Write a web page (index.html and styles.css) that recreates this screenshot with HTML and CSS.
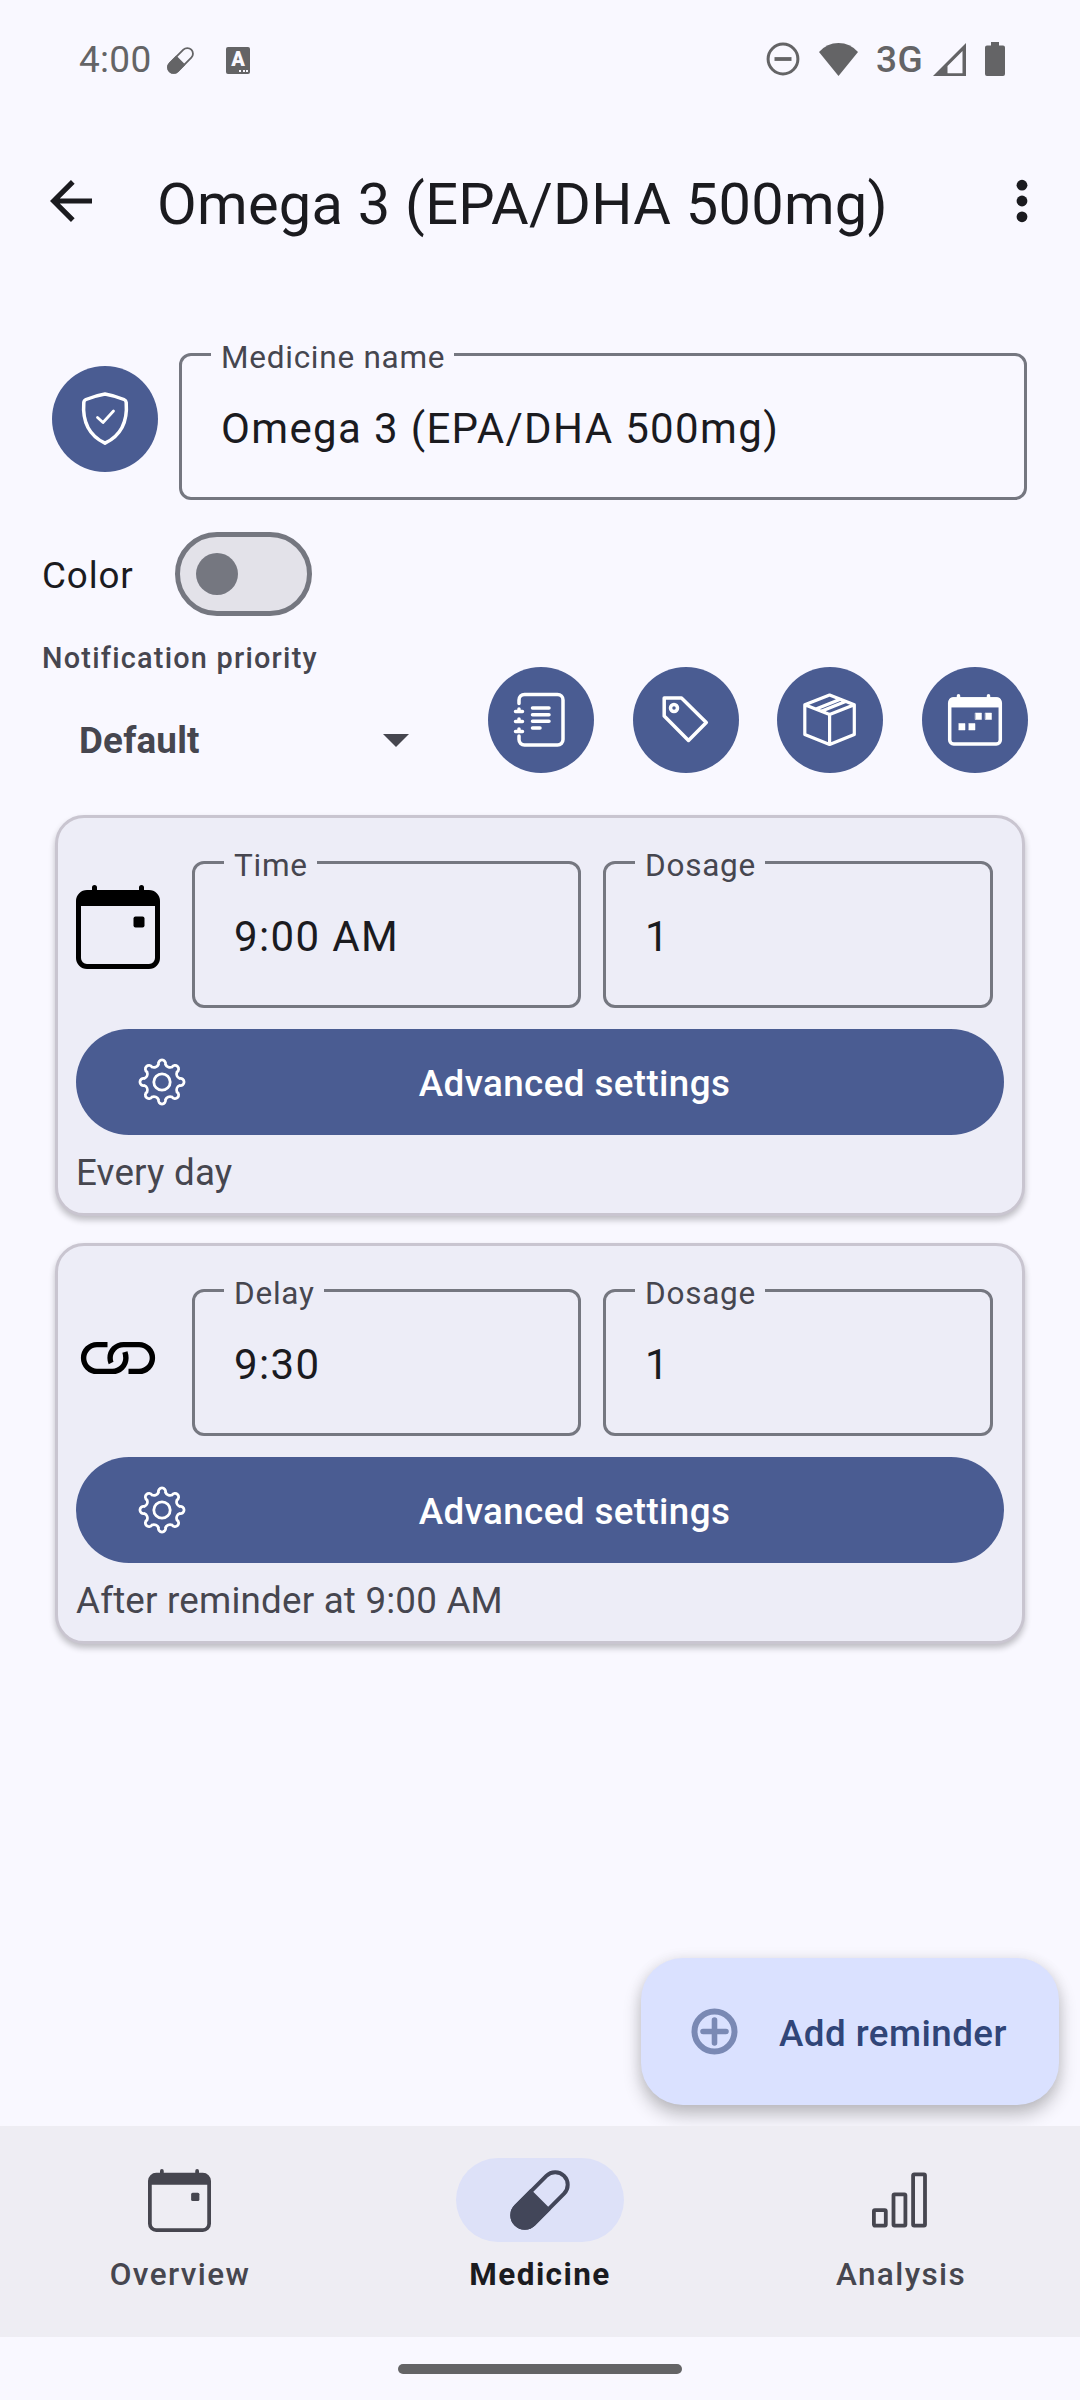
FILE: index.html
```html
<!DOCTYPE html>
<html lang="en">
<head>
<meta charset="utf-8">
<title>Omega 3 (EPA/DHA 500mg)</title>
<link rel="stylesheet" href="styles.css">
</head>
<body>
<svg class="defs" aria-hidden="true">
  <symbol id="pill" viewBox="0 0 60 60">
    <g transform="rotate(45 30 30)">
      <rect x="17.5" y="-4" width="25" height="68" rx="12.5" fill="none" stroke="currentColor" stroke-width="4"/>
      <path d="M15.5 29h29v22.500a14.500 14.500 0 0 1-29 0z" fill="currentColor"/>
    </g>
  </symbol>
  <symbol id="calendar" viewBox="0 0 84 84">
    <path d="M16 2.500a2.500 2.500 0 0 1 5 0v2.500h42V2.500a2.500 2.500 0 0 1 5 0v2.500h5a11 11 0 0 1 11 11v57a11 11 0 0 1-11 11H11A11 11 0 0 1 0 73V16A11 11 0 0 1 11 5h5zM5 21v52a6 6 0 0 0 6 6h62a6 6 0 0 0 6-6V21z" fill="currentColor" fill-rule="evenodd"/>
    <rect x="57.500" y="31.500" width="11" height="11" rx="2" fill="currentColor"/>
  </symbol>
  <symbol id="gear" viewBox="-24 -24 48 48">
    <g fill="none" stroke="currentColor" stroke-width="2.800">
      <path d="M-3.510-17.650A3.600 3.600 0 1 1 3.510-17.650A5 5 0 0 0 10-14.970A3.600 3.600 0 1 1 14.970-10A5 5 0 0 0 17.650-3.510A3.600 3.600 0 1 1 17.650 3.510A5 5 0 0 0 14.970 10A3.600 3.600 0 1 1 10 14.970A5 5 0 0 0 3.510 17.650A3.600 3.600 0 1 1-3.510 17.650A5 5 0 0 0-10 14.970A3.600 3.600 0 1 1-14.970 10A5 5 0 0 0-17.650 3.510A3.600 3.600 0 1 1-17.650-3.510A5 5 0 0 0-14.970-10A3.600 3.600 0 1 1-10-14.970A5 5 0 0 0-3.510-17.650z"/>
      <circle r="8.200"/>
    </g>
  </symbol>
</svg>

<header class="status">
  <span class="time">4:00</span>
  <svg class="s-pill" viewBox="0 0 60 60"><use href="#pill"/></svg>
  <span class="s-app">A<i></i></span>
  <div class="status-right">
    <svg width="34" height="34" viewBox="0 0 34 34" fill="none" stroke="currentColor"><circle cx="17" cy="17" r="14.900" stroke-width="3"/><path d="M8.500 17h17" stroke-width="3.800"/></svg>
    <svg class="s-wifi" width="39" height="34" viewBox="0 0 39 34"><path d="M0 10Q8 1 19.500 1T39 10L19.500 34z" fill="currentColor"/></svg>
    <span class="net">3G</span>
    <svg class="s-signal" width="33" height="34" viewBox="0 0 33 34"><path d="M0 34L33 1v33zM14.500 24v7.200H29.500V9z" fill="currentColor" fill-rule="evenodd"/></svg>
    <svg class="s-battery" width="20" height="34" viewBox="0 0 20 34"><path d="M6 0h8v3.500h4a2 2 0 0 1 2 2V32a2 2 0 0 1-2 2H2a2 2 0 0 1-2-2V5.500a2 2 0 0 1 2-2h4z" fill="currentColor"/></svg>
  </div>
</header>

<div class="appbar">
  <svg class="back" width="42" height="42" viewBox="0 0 42 42" fill="none" stroke="currentColor" stroke-width="5.200"><path d="M22.800 1.900L3.700 21l19.100 19.100M3 21h39"/></svg>
  <h1>Omega 3 (EPA/DHA 500mg)</h1>
  <svg class="more" width="12" height="44" viewBox="0 0 12 44" fill="currentColor"><circle cx="6" cy="6.200" r="5.400"/><circle cx="6" cy="22" r="5.400"/><circle cx="6" cy="37.800" r="5.400"/></svg>
</div>

<main>
  <div class="name-row">
    <button class="round"><svg viewBox="0 0 106 106"><path d="M53 28Q62 29.500 72 33.500q2 .8 2.200 3Q76.500 66 53 77.200Q29.500 66 31.800 36.500q.2-2.200 2.200-3Q44 29.500 53 28z"/><path d="M45.500 51.500l5.500 5 10.500-11.500" stroke-width="2.800"/></svg></button>
    <div class="field name-field"><span class="label">Medicine name</span><span class="value">Omega 3 (EPA/DHA 500mg)</span></div>
  </div>
  <div class="color-row"><span>Color</span><div class="toggle"><i></i></div></div>
  <div class="priority-row">
    <div class="priority">
      <div class="priority-label">Notification priority</div>
      <div class="select"><span>Default</span><svg width="26" height="13" viewBox="0 0 26 13"><path d="M0 0h26L13 13z" fill="currentColor"/></svg></div>
    </div>
    <div class="actions">
      <button class="round"><svg viewBox="0 0 106 106"><path d="M31 36.500V33a5.500 5.500 0 0 1 5.500-5.500h33A5.500 5.500 0 0 1 75 33v39.500a5.500 5.500 0 0 1-5.500 5.500h-33a5.500 5.500 0 0 1-5.500-5.500V69"/><path d="M27.500 44.500h7m-3.500-2.500v2M27.500 54.500h7m-3.500-2.500v2M27.500 64.500h7m-3.500-2.500v2M44.500 41h16.500M44.500 47.700h16.500M44.500 54.300h16.500M44.500 61h7.500"/></svg></button>
      <button class="round"><svg viewBox="0 0 106 106"><path d="M31.200 31h17.300L73.300 55.500 55.500 73.500 31.200 49z"/><circle cx="41" cy="41" r="3.500"/></svg></button>
      <button class="round"><svg viewBox="0 0 106 106"><path d="M52.600 28L77.300 37.800V67.500L52.600 77.500 27.800 67.500V37.800zM27.800 37.800L52.600 47.500 77.300 37.800M52.600 47.500v30M39 42L63.300 32.300M44.300 44.200L68.500 34.500" stroke-width="3.200"/></svg></button>
      <button class="round"><svg viewBox="0 0 106 106"><rect x="27.700" y="32" width="50.600" height="45" rx="4"/><path d="M36.500 28.700v4M66.500 28.700v4"/><path d="M27 40V34.500a4 4 0 0 1 4-4H75a4 4 0 0 1 4 4V40zM53.500 46h6v6.500h-6zM63.500 46h6v6.500h-6zM37 56.500h6V63h-6zM47 56.500h6V63h-6z" fill="#fff" stroke-width=".5"/></svg></button>
    </div>
  </div>

  <section class="card">
    <div class="fields">
      <svg class="kind" viewBox="0 0 84 84"><use href="#calendar" /></svg>
      <div class="field"><span class="label">Time</span><span class="value">9:00 AM</span></div>
      <div class="field"><span class="label">Dosage</span><span class="value">1</span></div>
    </div>
    <button class="advanced"><svg><use href="#gear"/></svg><span>Advanced settings</span></button>
    <p>Every day</p>
  </section>

  <section class="card">
    <div class="fields">
      <svg class="kind" viewBox="76 1313 84 84" fill="none" stroke="currentColor" stroke-width="5.400"><path d="M107.500 1344.600H97a13.400 13.400 0 0 0 0 26.800h15.500a13.400 13.400 0 0 0 13.400-13.400q0-3-1-6M128.500 1371.400H139a13.400 13.400 0 0 0 0-26.800h-15.500a13.400 13.400 0 0 0-13.400 13.400q0 3 1 5"/></svg>
      <div class="field"><span class="label">Delay</span><span class="value">9:30</span></div>
      <div class="field"><span class="label">Dosage</span><span class="value">1</span></div>
    </div>
    <button class="advanced"><svg><use href="#gear"/></svg><span>Advanced settings</span></button>
    <p>After reminder at 9:00 AM</p>
  </section>

  <button class="fab"><svg width="47" height="47" viewBox="0 0 47 47" fill="none" stroke="currentColor"><circle cx="23.500" cy="23.500" r="20" stroke-width="6"/><path d="M23.500 12v23M12 23.500h23" stroke-width="5.600" stroke-linecap="round"/></svg><span>Add reminder</span></button>
</main>

<nav>
  <a class="tab"><span class="ind"><svg class="n-cal" viewBox="0 0 84 84"><use href="#calendar"/></svg></span><span>Overview</span></a>
  <a class="tab active"><span class="ind"><svg class="n-pill" viewBox="0 0 60 60"><use href="#pill"/></svg></span><span>Medicine</span></a>
  <a class="tab"><span class="ind"><svg class="n-bars" width="56" height="56" viewBox="0 0 56 56" fill="none" stroke="currentColor" stroke-width="3.800"><rect x="1.900" y="38.200" width="11.900" height="15.400" rx="1"/><rect x="21.500" y="22.300" width="11.900" height="31.300" rx="1"/><rect x="41.100" y="2.400" width="11.900" height="51.200" rx="1"/></svg></span><span>Analysis</span></a>
</nav>
<footer><i></i></footer>
</body>
</html>
```
FILE: styles.css
```css
* { box-sizing: border-box; }
body {
  margin: 0;
  height: 2400px;
  display: flex;
  flex-direction: column;
  background: #f9f8ff;
  color: #1b1b1f;
  font-family: Roboto, sans-serif;
  overflow: hidden;
}
.defs { position: absolute; width: 0; height: 0; }
button { border: 0; padding: 0; margin: 0; font: inherit; color: inherit; }
svg { display: block; flex: none; overflow: visible; }
symbol { overflow: visible; }

/* system status bar */
.status { height: 118px; padding: 0 75px 0 79px; display: flex; align-items: center; color: #646466; font-size: 37px; }
.time { width: 88px; letter-spacing: .3px; }
.s-pill { width: 27px; height: 27px; margin-top: 3px; }
.s-app {
  position: relative; width: 24px; height: 27px; margin: 2px 0 0 32px; border-radius: 2px;
  background: #646466; color: #f9f8ff; font-size: 20px; line-height: 25px; font-weight: 900; text-align: center;
}
.s-app i { position: absolute; right: 2px; bottom: 2px; width: 9px; height: 2px; background: repeating-linear-gradient(90deg, #f9f8ff 0 2px, transparent 2px 3.500px); }
.status-right { margin-left: auto; display: flex; align-items: center; }
.s-wifi { margin-left: 19px; }
.net { margin-left: 18px; width: 57px; font-weight: 500; letter-spacing: .4px; }
.s-signal { display: block; }
.s-battery { margin-left: 19px; }

/* app bar */
.appbar { height: 167px; padding: 0 52px 2px 50px; display: flex; align-items: center; }
.appbar h1 { margin: 0; padding-top: 7px; margin-left: 65px; font-size: 57.750px; font-weight: 400; line-height: 72px; letter-spacing: .27px; white-space: nowrap; }
.more { margin-left: auto; }

main { position: relative; flex: 1; padding-top: 68px; }
.round { width: 106px; height: 106px; border-radius: 50%; background: #4a5c92; }
.round svg { width: 106px; height: 106px; fill: none; stroke: #fff; stroke-width: 3.500; stroke-linejoin: round; stroke-linecap: round; }

/* outlined text field */
.field { position: relative; height: 147px; border: 3px solid #757780; border-radius: 12px; display: flex; align-items: center; padding: 3px 0 0 39px; }
.label { position: absolute; left: 29px; top: -17px; padding: 0 9px 0 10px; line-height: 37px; font-size: 31.500px; letter-spacing: .75px; color: #46464f; background: #f9f8ff; }
.value { font-size: 42px; letter-spacing: 1.350px; white-space: nowrap; }

.name-row { display: flex; padding: 0 53px 0 52px; gap: 21px; }
.name-row .round { margin-top: 13px; }
.name-field { flex: 1; }

.color-row { margin-top: 32px; padding-left: 42px; height: 84px; display: flex; align-items: center; font-size: 36.750px; }
.color-row span { width: 133px; padding-top: 3px; letter-spacing: .9px; }
.toggle { width: 137px; height: 84px; border: 5.250px solid #757780; border-radius: 42px; background: #e3e2e9; padding: 16px; }
.toggle i { display: block; width: 42px; height: 42px; border-radius: 50%; background: #757780; }

.priority-row { display: flex; justify-content: space-between; padding: 0 52px 0 42px; color: #46464f; }
.priority { width: 367px; padding-top: 25px; }
.priority-label { font-size: 28.875px; font-weight: 500; line-height: 35px; letter-spacing: 1.230px; }
.select { margin-top: 39px; padding-left: 37px; height: 50px; display: flex; align-items: center; justify-content: space-between; font-size: 36.750px; font-weight: 700; letter-spacing: .2px; }
.actions { margin-top: 51px; width: 540px; display: flex; justify-content: space-between; }

/* reminder cards */
.card { height: 401px; margin: 42px 55px 0; padding: 43px 18px 0; border: 3px solid #c9c5d0; border-radius: 29px; background: #ededf7; box-shadow: 0 4px 6px rgba(0, 0, 0, .24); }
.card + .card { margin-top: 27px; }
.card .label { background: #ededf7; }
.fields { display: flex; }
.fields .field { width: 389px; }
.fields .field + .field { width: 390px; margin-left: 22px; }
.kind { width: 84px; height: 84px; margin: 24px 32px 0 0; color: #000; }
.advanced { display: flex; align-items: center; width: 100%; height: 106px; margin-top: 21px; padding: 0 63px 0 62px; border-radius: 53px; background: #4a5c92; color: #fff; font-size: 36.750px; font-weight: 500; }
.advanced svg { width: 48px; height: 48px; margin-top: -1px; }
.advanced span { flex: 1; padding: 2px 0 0 22px; letter-spacing: .4px; }
.card p { margin: 16px 0 0; font-size: 36.750px; line-height: 43px; letter-spacing: .2px; color: #46464f; }

.fab { position: absolute; right: 21px; bottom: 21px; width: 418px; height: 147px; border-radius: 42px; background: #dae1ff; color: #304578; display: flex; align-items: center; padding-left: 50px; font-size: 36.750px; font-weight: 500; box-shadow: 0 10px 18px rgba(0, 0, 0, .24), 0 0 14px rgba(0, 0, 0, .07); }
.fab svg { color: #7a89b4; }
.fab span { margin-left: 41px; padding-top: 3px; letter-spacing: .45px; }

/* bottom navigation */
nav { position: relative; height: 211px; display: flex; background: #eeedf3; }
.tab { flex: 1; padding-top: 32px; display: flex; flex-direction: column; align-items: center; font-size: 31.500px; line-height: 39px; font-weight: 500; letter-spacing: 1.400px; color: #46464f; }
.tab:last-child > span:last-child { padding-left: 2px; }
.ind { width: 168px; height: 84px; margin-bottom: 13px; border-radius: 42px; display: flex; align-items: center; justify-content: center; }
.active { color: #1b1b1f; font-weight: 700; }
.active .ind { background: #dde1f8; color: #424659; }
.n-cal { width: 63px; height: 63px; margin-right: 1px; }
.n-pill { width: 60px; height: 60px; }
footer { height: 63px; padding-top: 27px; }
footer i { display: block; width: 284px; height: 10px; margin: 0 auto; border-radius: 5px; background: #646466; }
```
